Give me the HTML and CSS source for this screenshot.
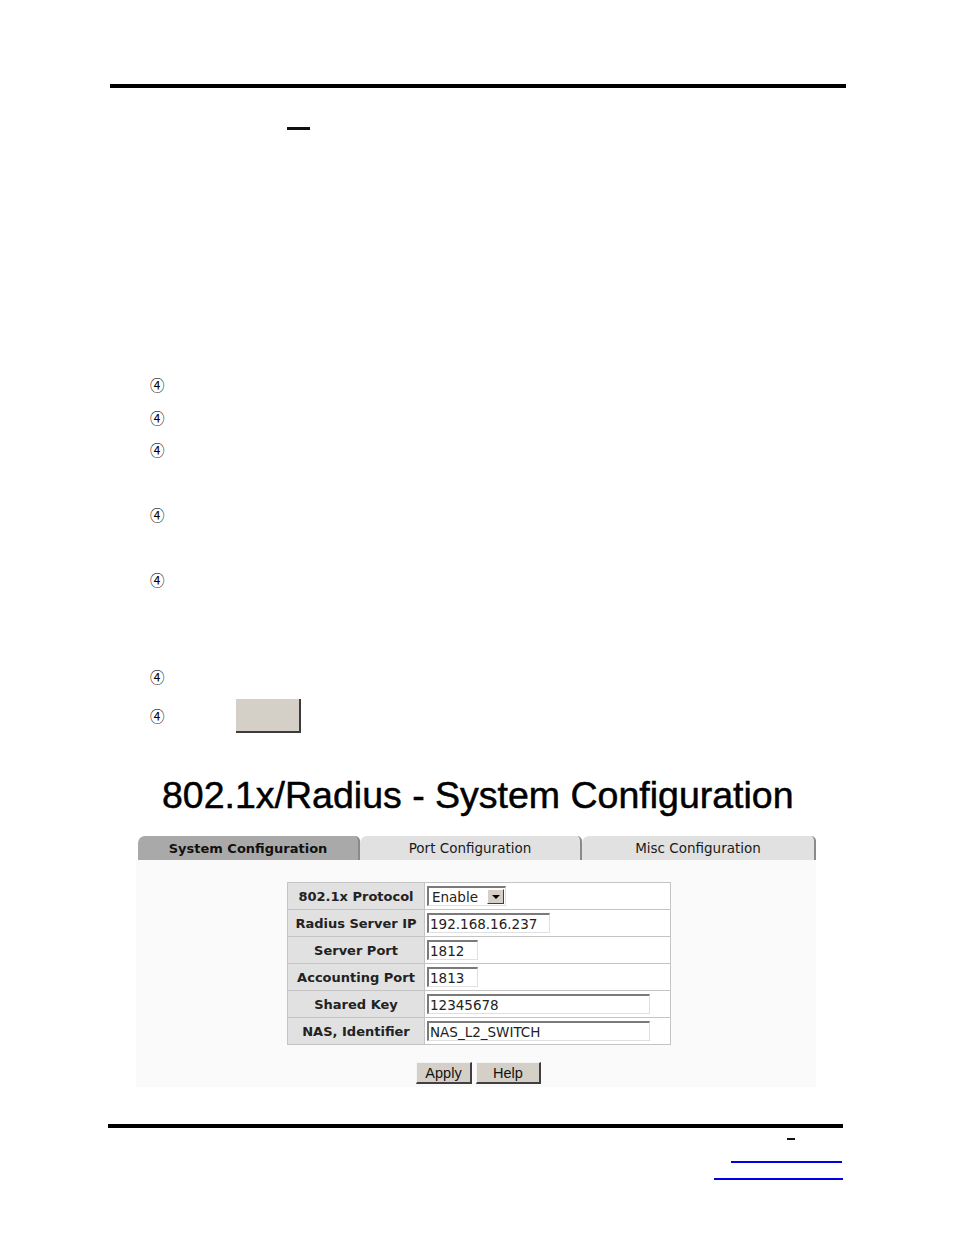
FILE: index.html
```html
<!DOCTYPE html>
<html>
<head>
<meta charset="utf-8">
<link rel="stylesheet" href="styles.css">
</head>
<body>
<div class="page">
  <div class="rule rule-top"></div>
  <div class="dash dash-top"></div>

  <ul class="steps">
    <li class="step h33"><span class="mark">④</span></li>
    <li class="step h32"><span class="mark">④</span></li>
    <li class="step h65"><span class="mark">④</span></li>
    <li class="step h65"><span class="mark">④</span></li>
    <li class="step h97"><span class="mark">④</span></li>
    <li class="step h30"><span class="mark">④</span></li>
    <li class="step step-btn"><span class="mark">④</span><span class="big-btn"></span></li>
  </ul>

  <div class="shot">
    <h1 class="title">802.1x/Radius - System Configuration</h1>
    <div class="tabs">
      <div class="tab tab-active">System Configuration</div>
      <div class="tab">Port Configuration</div>
      <div class="tab tab-last">Misc Configuration</div>
    </div>
    <div class="panel">
      <table class="cfg">
        <tr>
          <th>802.1x Protocol</th>
          <td><span class="select"><span class="sel-text">Enable</span><span class="sel-btn"><span class="tri"></span></span></span></td>
        </tr>
        <tr>
          <th>Radius Server IP</th>
          <td><span class="field w-ip">192.168.16.237</span></td>
        </tr>
        <tr>
          <th>Server Port</th>
          <td><span class="field w-port">1812</span></td>
        </tr>
        <tr>
          <th>Accounting Port</th>
          <td><span class="field w-port">1813</span></td>
        </tr>
        <tr>
          <th>Shared Key</th>
          <td><span class="field w-long">12345678</span></td>
        </tr>
        <tr>
          <th>NAS, Identifier</th>
          <td><span class="field w-long">NAS_L2_SWITCH</span></td>
        </tr>
      </table>
      <div class="actions">
        <span class="btn btn-apply">Apply</span>
        <span class="btn btn-help">Help</span>
      </div>
    </div>
  </div>

  <div class="rule rule-bottom"></div>
  <div class="dash dash-bottom"></div>
  <div class="link link-1"></div>
  <div class="link link-2"></div>
</div>
</body>
</html>
```

FILE: styles.css
```css
html, body {
  margin: 0;
  padding: 0;
  background: #ffffff;
}

.page {
  width: 954px;
  height: 1235px;
  padding-top: 84px;
  box-sizing: border-box;
  overflow: hidden;
  font-family: "DejaVu Sans", Verdana, sans-serif;
  color: #111;
}

.rule {
  height: 4px;
  background: #000;
}

.rule-top {
  margin-left: 110px;
  width: 736px;
}

.dash {
  background: #111;
}

.dash-top {
  margin: 39px 0 0 287px;
  width: 23px;
  height: 3px;
}

.steps {
  list-style: none;
  margin: 247px 0 0 0;
  padding: 0;
}

.step {
  display: flex;
  align-items: flex-start;
  padding-left: 150px;
  line-height: 16px;
  box-sizing: border-box;
}

.h33 { height: 33px; }
.h32 { height: 32px; }
.h65 { height: 65px; }
.h97 { height: 97px; }
.h30 { height: 30px; }

.step-btn {
  height: 34px;
  align-items: center;
}

.mark {
  display: inline-block;
  width: 20px;
  font-family: "Noto Sans CJK JP", "DejaVu Sans", sans-serif;
  font-size: 14.5px;
  color: #000;
}

.big-btn {
  display: block;
  margin-left: 66px;
  width: 63px;
  height: 32px;
  background: #d4d0c8;
  border-right: 2px solid #3c3c3c;
  border-bottom: 2px solid #3c3c3c;
}

.shot {
  margin-left: 136px;
  width: 680px;
}

.title {
  margin: 40px 0 0 0;
  padding-left: 26px;
  font-family: "Liberation Sans", Arial, sans-serif;
  font-weight: normal;
  font-size: 37.5px;
  line-height: 44px;
  color: #000;
  white-space: nowrap;
  -webkit-text-stroke: 0.5px #000;
}

.tabs {
  display: flex;
  margin: 19px 0 0 2px;
  height: 24px;
}

.tab {
  width: 222px;
  height: 24px;
  box-sizing: border-box;
  background: #e1e1e1;
  border-right: 2px solid #8a8a8a;
  border-top-left-radius: 7px;
  border-top-right-radius: 5px;
  text-align: center;
  font-size: 13.5px;
  line-height: 25px;
  color: #1a1a1a;
}

.tab-active {
  background: #a9a9a9;
  font-weight: bold;
  font-size: 13px;
  color: #111;
}

.tab-last {
  width: 234px;
}

.panel {
  background: #fafafa;
  height: 227px;
  padding-top: 22px;
  box-sizing: border-box;
}

.cfg {
  margin-left: 151px;
  width: 384px;
  border-collapse: collapse;
  border: 1px solid #b4b4b4;
  background: #fff;
}

.cfg th,
.cfg td {
  border: 1px solid #c4c4c4;
  height: 26px;
  padding: 0;
}

.cfg th {
  width: 136px;
  background: #e1e1e1;
  font-size: 13px;
  font-weight: bold;
  color: #222;
  text-align: center;
  white-space: nowrap;
}

.cfg td {
  padding-left: 2px;
  text-align: left;
}

.field,
.select {
  display: flex;
  align-items: center;
  height: 20px;
  box-sizing: border-box;
  border-top: 2px solid #7a7a7a;
  border-left: 2px solid #7a7a7a;
  border-right: 1px solid #e0e0e0;
  border-bottom: 1px solid #e0e0e0;
  background: #fff;
  font-size: 13.5px;
  color: #222;
  padding-left: 1px;
  white-space: nowrap;
}

.w-ip { width: 123px; }
.w-port { width: 51px; }
.w-long { width: 223px; }

.select {
  width: 79px;
  justify-content: space-between;
  padding-left: 3px;
  padding-right: 1px;
}

.sel-btn {
  display: flex;
  align-items: center;
  justify-content: center;
  width: 17px;
  height: 15px;
  box-sizing: border-box;
  background: #d4d0c8;
  border-top: 1px solid #fff;
  border-left: 1px solid #fff;
  border-right: 1px solid #404040;
  border-bottom: 1px solid #404040;
}

.tri {
  width: 0;
  height: 0;
  border-left: 4px solid transparent;
  border-right: 4px solid transparent;
  border-top: 4px solid #000;
}

.actions {
  display: flex;
  gap: 4px;
  margin: 17px 0 0 280px;
}

.btn {
  display: flex;
  align-items: center;
  justify-content: center;
  height: 22px;
  box-sizing: border-box;
  background: #d4d0c8;
  border-top: 1px solid #f4f4f4;
  border-left: 1px solid #f4f4f4;
  border-right: 2px solid #404040;
  border-bottom: 2px solid #404040;
  font-family: "Liberation Sans", Arial, sans-serif;
  font-size: 14.5px;
  color: #111;
}

.btn-apply { width: 56px; }
.btn-help { width: 65px; }

.rule-bottom {
  margin: 37px 0 0 108px;
  width: 735px;
}

.dash-bottom {
  margin: 10px 0 0 787px;
  width: 8px;
  height: 2px;
}

.link {
  height: 2px;
  background: #0000e0;
}

.link-1 {
  margin: 21px 0 0 731px;
  width: 111px;
}

.link-2 {
  margin: 15px 0 0 714px;
  width: 129px;
}
```
